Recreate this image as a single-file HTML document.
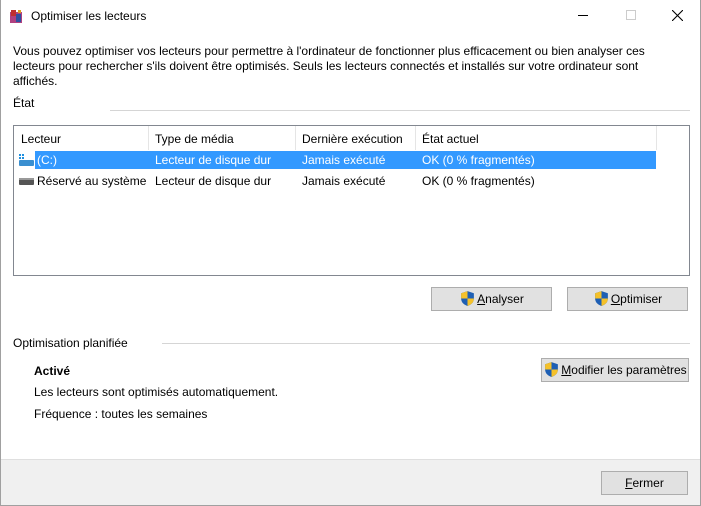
<!DOCTYPE html>
<html><head><meta charset="utf-8"><style>
*{margin:0;padding:0;box-sizing:border-box}
body{width:701px;height:506px;position:relative;background:#fff;font-family:"Liberation Sans",sans-serif;font-size:12px;color:#000;overflow:hidden}
.a{position:absolute;white-space:nowrap}
.win{position:absolute;left:0;top:0;width:701px;height:506px;border:1px solid #a0a0a0;border-top:none}
.btn{position:absolute;background:#e1e1e1;border:1px solid #adadad;text-align:center;line-height:22px}
.line{position:absolute;height:1px;background:#d5d5d5}
.sh{display:inline-block;vertical-align:-4px;margin-right:1px}
u{text-decoration:underline}
</style></head><body>
<div class="win"></div>
<svg class="a" style="left:8px;top:8px" width="16" height="16"><rect x="2" y="4" width="12" height="11" fill="#b04080"/><rect x="3" y="2" width="5" height="6" fill="#c03030"/><rect x="8" y="6" width="5" height="8" fill="#3050a0"/><rect x="10" y="2" width="3" height="3" fill="#e0a020"/></svg>
<div class="a" style="left:31px;top:9px;font-size:12px">Optimiser les lecteurs</div>
<div class="a" style="left:578px;top:15px;width:10px;height:1px;background:#000"></div>
<div class="a" style="left:626px;top:10px;width:10px;height:10px;border:1px solid #ccc"></div>
<svg class="a" style="left:672px;top:10px" width="11" height="11"><path d="M0 0L11 11M11 0L0 11" stroke="#000" stroke-width="1.1"/></svg>
<div class="a" style="left:13px;top:44px;line-height:15px;font-size:12px;white-space:normal;width:686px">Vous pouvez optimiser vos lecteurs pour permettre à l'ordinateur de fonctionner plus efficacement ou bien analyser ces<br>lecteurs pour rechercher s'ils doivent être optimisés. Seuls les lecteurs connectés et installés sur votre ordinateur sont<br>affichés.</div>
<div class="a" style="left:13px;top:96px">État</div>
<div class="line" style="left:110px;top:110px;width:580px"></div>
<div class="a" style="left:13px;top:125px;width:677px;height:151px;border:1px solid #828790"></div>
<div class="a" style="left:148px;top:126px;width:1px;height:24px;background:#e5e5e5"></div>
<div class="a" style="left:295px;top:126px;width:1px;height:24px;background:#e5e5e5"></div>
<div class="a" style="left:415px;top:126px;width:1px;height:24px;background:#e5e5e5"></div>
<div class="a" style="left:656px;top:126px;width:1px;height:24px;background:#e5e5e5"></div>
<div class="a" style="left:21px;top:132px">Lecteur</div>
<div class="a" style="left:155px;top:132px">Type de média</div>
<div class="a" style="left:302px;top:132px">Dernière exécution</div>
<div class="a" style="left:422px;top:132px">État actuel</div>
<div class="a" style="left:35px;top:151px;width:621px;height:18px;background:#3399ff"></div>
<svg class="a" style="left:18px;top:153px" width="16" height="14"><rect x="1" y="1" width="2" height="2" fill="#1e90e0"/><rect x="4" y="1" width="2" height="2" fill="#1e90e0"/><rect x="1" y="4" width="2" height="2" fill="#1e90e0"/><rect x="4" y="4" width="2" height="2" fill="#1e90e0"/><rect x="1" y="7" width="15" height="6" rx="1" fill="#3a8fd0"/></svg>
<div class="a" style="left:37px;top:153px;color:#fff">(C:)</div>
<div class="a" style="left:155px;top:153px;color:#fff">Lecteur de disque dur</div>
<div class="a" style="left:302px;top:153px;color:#fff">Jamais exécuté</div>
<div class="a" style="left:422px;top:153px;color:#fff">OK (0 % fragmentés)</div>
<svg class="a" style="left:18px;top:175px" width="16" height="12"><rect x="1" y="3" width="15" height="7" rx="1" fill="#555"/><rect x="1" y="3" width="15" height="2" fill="#999"/></svg>
<div class="a" style="left:37px;top:174px">Réservé au système</div>
<div class="a" style="left:155px;top:174px">Lecteur de disque dur</div>
<div class="a" style="left:302px;top:174px">Jamais exécuté</div>
<div class="a" style="left:422px;top:174px">OK (0 % fragmentés)</div>
<div class="btn" style="left:431px;top:287px;width:121px;height:24px"><svg class="sh" width="17" height="17" viewBox="0 0 16 16"><path d="M8 1L14 3V8C14 12 11 14 8 15C5 14 2 12 2 8V3Z" fill="#1e5fb4"/><path d="M8 1V8H2V3ZM8 8H14C14 12 11 14 8 15Z" fill="#f5c12a"/></svg><u>A</u>nalyser</div>
<div class="btn" style="left:567px;top:287px;width:121px;height:24px"><svg class="sh" width="17" height="17" viewBox="0 0 16 16"><path d="M8 1L14 3V8C14 12 11 14 8 15C5 14 2 12 2 8V3Z" fill="#1e5fb4"/><path d="M8 1V8H2V3ZM8 8H14C14 12 11 14 8 15Z" fill="#f5c12a"/></svg><u>O</u>ptimiser</div>
<div class="a" style="left:13px;top:336px">Optimisation planifiée</div>
<div class="line" style="left:162px;top:343px;width:528px"></div>
<div class="a" style="left:34px;top:364px;font-weight:bold">Activé</div>
<div class="btn" style="left:541px;top:358px;width:148px;height:24px"><svg class="sh" width="17" height="17" viewBox="0 0 16 16"><path d="M8 1L14 3V8C14 12 11 14 8 15C5 14 2 12 2 8V3Z" fill="#1e5fb4"/><path d="M8 1V8H2V3ZM8 8H14C14 12 11 14 8 15Z" fill="#f5c12a"/></svg><u>M</u>odifier les paramètres</div>
<div class="a" style="left:34px;top:385px">Les lecteurs sont optimisés automatiquement.</div>
<div class="a" style="left:34px;top:407px">Fréquence : toutes les semaines</div>
<div class="a" style="left:1px;top:459px;width:699px;height:46px;background:#f0f0f0;border-top:1px solid #dfdfdf"></div>
<div class="btn" style="left:601px;top:471px;width:87px;height:24px"><u>F</u>ermer</div>
</body></html>
